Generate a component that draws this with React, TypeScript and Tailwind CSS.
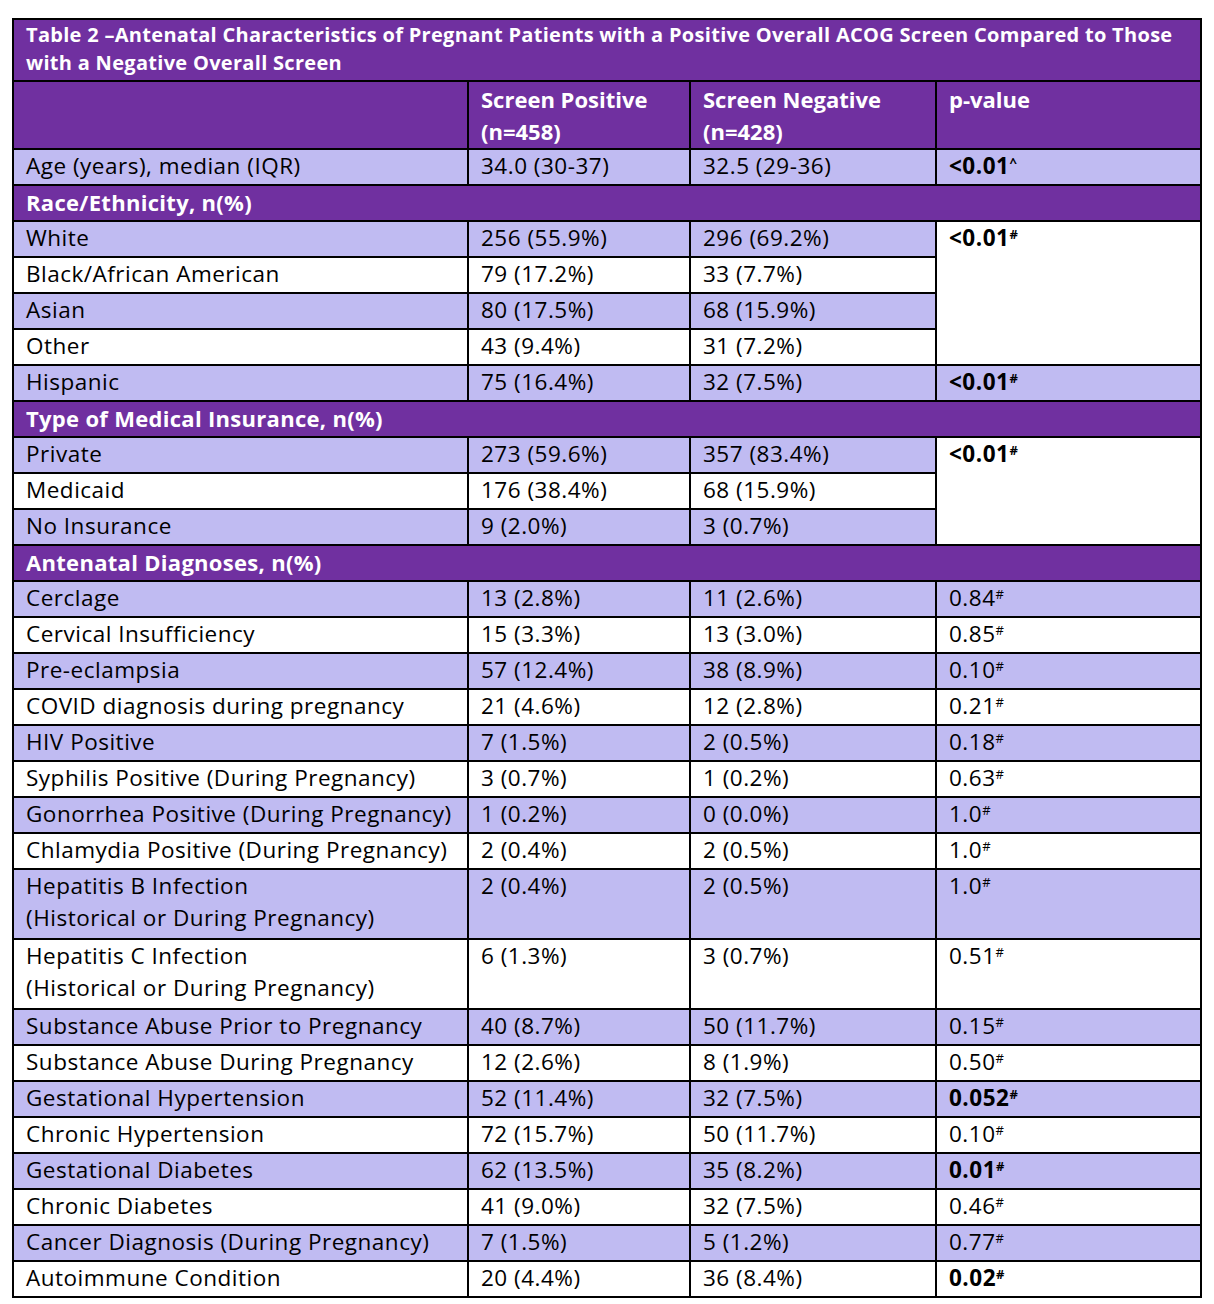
import React from 'react';

type Row =
  | { kind: 'section'; label: string }
  | {
      kind: 'data';
      label: React.ReactNode;
      a: string;
      b: string;
      p?: string;
      sup?: string;
      bold?: boolean;
      span?: number;
      pWhite?: boolean;
      light: boolean;
      tall?: boolean;
    };

const ROWS: Row[] = [
  { kind: 'data', label: 'Age (years), median (IQR)', a: '34.0 (30-37)', b: '32.5 (29-36)', p: '<0.01', sup: '^', bold: true, light: true },
  { kind: 'section', label: 'Race/Ethnicity, n(%)' },
  { kind: 'data', label: 'White', a: '256 (55.9%)', b: '296 (69.2%)', p: '<0.01', sup: '#', bold: true, span: 4, pWhite: true, light: true },
  { kind: 'data', label: 'Black/African American', a: '79 (17.2%)', b: '33 (7.7%)', light: false },
  { kind: 'data', label: 'Asian', a: '80 (17.5%)', b: '68 (15.9%)', light: true },
  { kind: 'data', label: 'Other', a: '43 (9.4%)', b: '31 (7.2%)', light: false },
  { kind: 'data', label: 'Hispanic', a: '75 (16.4%)', b: '32 (7.5%)', p: '<0.01', sup: '#', bold: true, light: true },
  { kind: 'section', label: 'Type of Medical Insurance, n(%)' },
  { kind: 'data', label: 'Private', a: '273 (59.6%)', b: '357 (83.4%)', p: '<0.01', sup: '#', bold: true, span: 3, pWhite: true, light: true },
  { kind: 'data', label: 'Medicaid', a: '176 (38.4%)', b: '68 (15.9%)', light: false },
  { kind: 'data', label: 'No Insurance', a: '9 (2.0%)', b: '3 (0.7%)', light: true },
  { kind: 'section', label: 'Antenatal Diagnoses, n(%)' },
  { kind: 'data', label: 'Cerclage', a: '13 (2.8%)', b: '11 (2.6%)', p: '0.84', sup: '#', light: true },
  { kind: 'data', label: 'Cervical Insufficiency', a: '15 (3.3%)', b: '13 (3.0%)', p: '0.85', sup: '#', light: false },
  { kind: 'data', label: 'Pre-eclampsia', a: '57 (12.4%)', b: '38 (8.9%)', p: '0.10', sup: '#', light: true },
  { kind: 'data', label: 'COVID diagnosis during pregnancy', a: '21 (4.6%)', b: '12 (2.8%)', p: '0.21', sup: '#', light: false },
  { kind: 'data', label: 'HIV Positive', a: '7 (1.5%)', b: '2 (0.5%)', p: '0.18', sup: '#', light: true },
  { kind: 'data', label: 'Syphilis Positive (During Pregnancy)', a: '3 (0.7%)', b: '1 (0.2%)', p: '0.63', sup: '#', light: false },
  { kind: 'data', label: 'Gonorrhea Positive (During Pregnancy)', a: '1 (0.2%)', b: '0 (0.0%)', p: '1.0', sup: '#', light: true },
  { kind: 'data', label: 'Chlamydia Positive (During Pregnancy)', a: '2 (0.4%)', b: '2 (0.5%)', p: '1.0', sup: '#', light: false },
  {
    kind: 'data',
    label: (<>Hepatitis B Infection<br />(Historical or During Pregnancy)</>),
    a: '2 (0.4%)', b: '2 (0.5%)', p: '1.0', sup: '#', light: true, tall: true,
  },
  {
    kind: 'data',
    label: (<>Hepatitis C Infection<br />(Historical or During Pregnancy)</>),
    a: '6 (1.3%)', b: '3 (0.7%)', p: '0.51', sup: '#', light: false, tall: true,
  },
  { kind: 'data', label: 'Substance Abuse Prior to Pregnancy', a: '40 (8.7%)', b: '50 (11.7%)', p: '0.15', sup: '#', light: true },
  { kind: 'data', label: 'Substance Abuse During Pregnancy', a: '12 (2.6%)', b: '8 (1.9%)', p: '0.50', sup: '#', light: false },
  { kind: 'data', label: 'Gestational Hypertension', a: '52 (11.4%)', b: '32 (7.5%)', p: '0.052', sup: '#', bold: true, light: true },
  { kind: 'data', label: 'Chronic Hypertension', a: '72 (15.7%)', b: '50 (11.7%)', p: '0.10', sup: '#', light: false },
  { kind: 'data', label: 'Gestational Diabetes', a: '62 (13.5%)', b: '35 (8.2%)', p: '0.01', sup: '#', bold: true, light: true },
  { kind: 'data', label: 'Chronic Diabetes', a: '41 (9.0%)', b: '32 (7.5%)', p: '0.46', sup: '#', light: false },
  { kind: 'data', label: 'Cancer Diagnosis (During Pregnancy)', a: '7 (1.5%)', b: '5 (1.2%)', p: '0.77', sup: '#', light: true },
  { kind: 'data', label: 'Autoimmune Condition', a: '20 (4.4%)', b: '36 (8.4%)', p: '0.02', sup: '#', bold: true, light: false },
];

// body text sized so widths line up with the Calibri original
const cell = 'border-2 border-black px-3 align-top text-[22.5px] leading-[32px] tracking-[0.5px] text-black';
const headCell = 'border-2 border-black px-3 align-top text-[22px] leading-[32px] font-bold text-white';

export default function App() {
  return (
    <div className="bg-white min-h-[1304px] pt-[18px] pl-[12px] font-['Open_Sans','Liberation_Sans',sans-serif]">
      <table className="w-[1188px] table-fixed border-collapse border-2 border-black">
        <colgroup>
          <col className="w-[455px]" />
          <col className="w-[222px]" />
          <col className="w-[246px]" />
          <col className="w-[265px]" />
        </colgroup>
        <tbody>
          <tr className="h-[62px] bg-[#7030A0]">
            <td colSpan={4} className="border-2 border-black px-3 pt-[1px] align-top text-[20px] leading-[28px] font-bold text-white tracking-[0.3px]">
              Table 2 –Antenatal Characteristics of Pregnant Patients with a Positive Overall ACOG Screen Compared to Those
              <br />
              with a Negative Overall Screen
            </td>
          </tr>
          <tr className="h-[68px] bg-[#7030A0]">
            <td className="border-2 border-black" />
            <td className={`${headCell} leading-[30px] pt-[1px]`}>Screen Positive<br />(n=458)</td>
            <td className={`${headCell} leading-[30px] pt-[1px]`}>Screen Negative<br />(n=428)</td>
            <td className={`${headCell} leading-[30px] pt-[1px]`}>p-value</td>
          </tr>
          {ROWS.map((r, i) => {
            if (r.kind === 'section') {
              return (
                <tr key={i} className="h-[36px] bg-[#7030A0]">
                  <td colSpan={4} className={`${headCell} tracking-[0.3px]`}>{r.label}</td>
                </tr>
              );
            }
            const bg = r.light ? 'bg-[#C0BBF2]' : 'bg-white';
            return (
              <tr key={i} className={r.tall ? 'h-[70px]' : 'h-[36px]'}>
                <td className={`${cell} ${bg}`}>{r.label}</td>
                <td className={`${cell} ${bg}`}>{r.a}</td>
                <td className={`${cell} ${bg}`}>{r.b}</td>
                {r.p !== undefined && (
                  <td
                    rowSpan={r.span ?? 1}
                    className={`${cell} ${r.pWhite ? 'bg-white' : bg} ${r.bold ? 'font-bold tracking-[-0.2px]' : ''}`}
                  >
                    {r.p}
                    <sup className="text-[13px] -top-[7px]">{r.sup}</sup>
                  </td>
                )}
              </tr>
            );
          })}
        </tbody>
      </table>
    </div>
  );
}
